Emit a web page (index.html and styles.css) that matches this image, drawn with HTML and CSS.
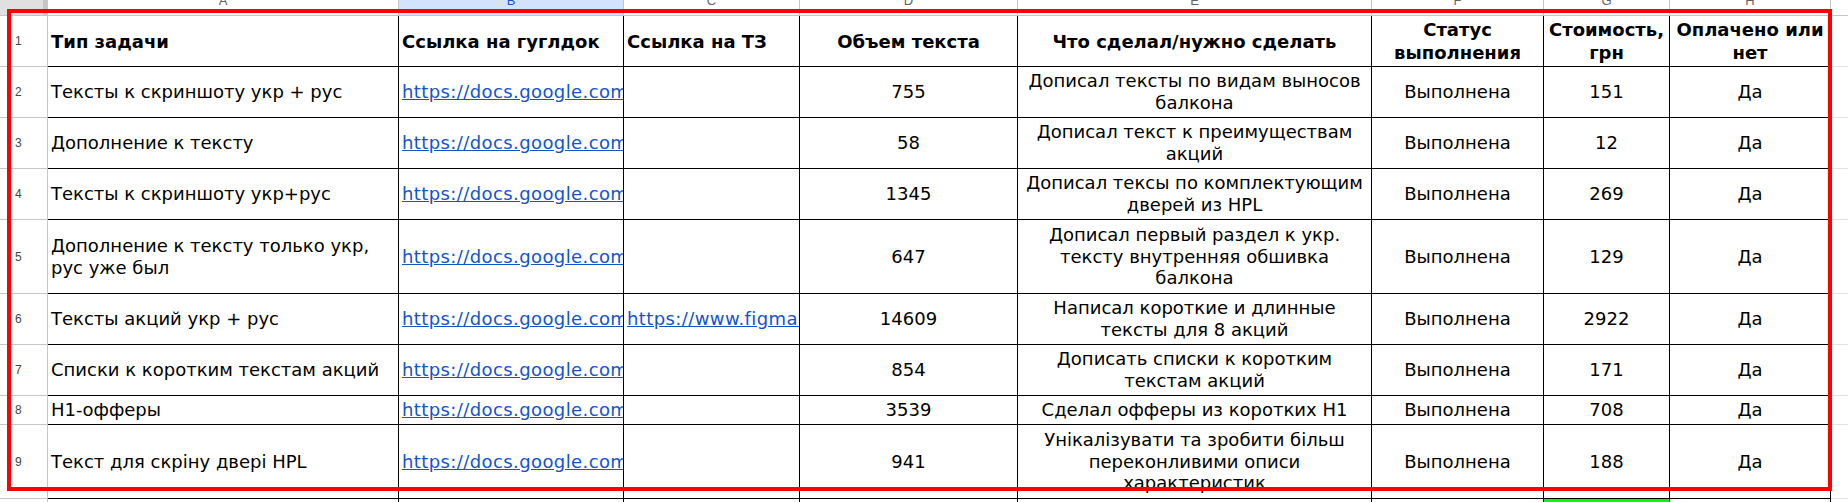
FILE: index.html
```html
<!DOCTYPE html>
<html lang="ru">
<head>
<meta charset="utf-8">
<title>Таблица задач</title>
<link rel="stylesheet" href="styles.css">
</head>
<body>
<div class="sheet">
  <div class="corner"></div>
  <div class="colhead"><span>A</span></div>
  <div class="colhead sel"><span>B</span></div>
  <div class="colhead"><span>C</span></div>
  <div class="colhead"><span>D</span></div>
  <div class="colhead"><span>E</span></div>
  <div class="colhead"><span>F</span></div>
  <div class="colhead"><span>G</span></div>
  <div class="colhead"><span>H</span></div>
  <div class="colhead last"></div>

  <div class="rowhead">1</div>
  <div class="cell hd">Тип задачи</div>
  <div class="cell hd">Ссылка на гуглдок</div>
  <div class="cell hd">Ссылка на ТЗ</div>
  <div class="cell hd c">Объем текста</div>
  <div class="cell hd c">Что сделал/нужно сделать</div>
  <div class="cell hd c">Статус<br>выполнения</div>
  <div class="cell hd c">Стоимость,<br>грн</div>
  <div class="cell hd c">Оплачено или<br>нет</div>
  <div class="out"></div>

  <div class="rowhead">2</div>
  <div class="cell">Тексты к скриншоту укр + рус</div>
  <div class="cell"><a class="lnk" href="#">https://docs.google.com/document/d/1</a></div>
  <div class="cell"></div>
  <div class="cell c">755</div>
  <div class="cell c">Дописал тексты по видам выносов<br>балкона</div>
  <div class="cell c">Выполнена</div>
  <div class="cell c">151</div>
  <div class="cell c">Да</div>
  <div class="out"></div>

  <div class="rowhead">3</div>
  <div class="cell">Дополнение к тексту</div>
  <div class="cell"><a class="lnk" href="#">https://docs.google.com/document/d/2</a></div>
  <div class="cell"></div>
  <div class="cell c">58</div>
  <div class="cell c">Дописал текст к преимуществам<br>акций</div>
  <div class="cell c">Выполнена</div>
  <div class="cell c">12</div>
  <div class="cell c">Да</div>
  <div class="out"></div>

  <div class="rowhead">4</div>
  <div class="cell">Тексты к скриншоту укр+рус</div>
  <div class="cell"><a class="lnk" href="#">https://docs.google.com/document/d/3</a></div>
  <div class="cell"></div>
  <div class="cell c">1345</div>
  <div class="cell c">Дописал тексы по комплектующим<br>дверей из HPL</div>
  <div class="cell c">Выполнена</div>
  <div class="cell c">269</div>
  <div class="cell c">Да</div>
  <div class="out"></div>

  <div class="rowhead">5</div>
  <div class="cell">Дополнение к тексту только укр,<br>рус уже был</div>
  <div class="cell"><a class="lnk" href="#">https://docs.google.com/document/d/4</a></div>
  <div class="cell"></div>
  <div class="cell c">647</div>
  <div class="cell c">Дописал первый раздел к укр.<br>тексту внутренняя обшивка<br>балкона</div>
  <div class="cell c">Выполнена</div>
  <div class="cell c">129</div>
  <div class="cell c">Да</div>
  <div class="out"></div>

  <div class="rowhead">6</div>
  <div class="cell">Тексты акций укр + рус</div>
  <div class="cell"><a class="lnk" href="#">https://docs.google.com/document/d/5</a></div>
  <div class="cell"><a class="lnk" href="#">https://www.figma.com/file/6</a></div>
  <div class="cell c">14609</div>
  <div class="cell c">Написал короткие и длинные<br>тексты для 8 акций</div>
  <div class="cell c">Выполнена</div>
  <div class="cell c">2922</div>
  <div class="cell c">Да</div>
  <div class="out"></div>

  <div class="rowhead">7</div>
  <div class="cell">Списки к коротким текстам акций</div>
  <div class="cell"><a class="lnk" href="#">https://docs.google.com/document/d/7</a></div>
  <div class="cell"></div>
  <div class="cell c">854</div>
  <div class="cell c">Дописать списки к коротким<br>текстам акций</div>
  <div class="cell c">Выполнена</div>
  <div class="cell c">171</div>
  <div class="cell c">Да</div>
  <div class="out"></div>

  <div class="rowhead">8</div>
  <div class="cell">Н1-офферы</div>
  <div class="cell"><a class="lnk" href="#">https://docs.google.com/document/d/8</a></div>
  <div class="cell"></div>
  <div class="cell c">3539</div>
  <div class="cell c">Сделал офферы из коротких Н1</div>
  <div class="cell c">Выполнена</div>
  <div class="cell c">708</div>
  <div class="cell c">Да</div>
  <div class="out"></div>

  <div class="rowhead">9</div>
  <div class="cell">Текст для скріну двері HPL</div>
  <div class="cell"><a class="lnk" href="#">https://docs.google.com/document/d/9</a></div>
  <div class="cell"></div>
  <div class="cell c">941</div>
  <div class="cell c">Унікалізувати та зробити більш<br>переконливими описи<br>характеристик</div>
  <div class="cell c">Выполнена</div>
  <div class="cell c">188</div>
  <div class="cell c">Да</div>
  <div class="out"></div>

  <div class="rowhead">10</div>
  <div class="cell"></div>
  <div class="cell"></div>
  <div class="cell"></div>
  <div class="cell"></div>
  <div class="cell"></div>
  <div class="cell"></div>
  <div class="cell green"></div>
  <div class="cell"></div>
  <div class="out"></div>

  <div class="frame"></div>
</div>
</body>
</html>
```

FILE: styles.css
```css
* { box-sizing: border-box; }

html, body {
  margin: 0;
  padding: 0;
  background: #ffffff;
  overflow: hidden;
}

.sheet {
  position: relative;
  display: grid;
  grid-template-columns: 48px 351px 225px 176px 218px 354px 172px 126px 161px 1fr;
  grid-template-rows: 16px 51px 51px 51px 51px 74px 51px 51px 29px 74px 30px;
  width: 1848px;
  height: 502px;
  overflow: hidden;
  font-family: "DejaVu Sans", sans-serif;
  font-size: 18px;
  color: #000000;
}

.corner {
  background: #e0e0e0;
  border-right: 5px solid #c6c6c6;
  border-bottom: 1px solid #c4c4c4;
}

.colhead {
  display: flex;
  justify-content: center;
  align-items: flex-start;
  overflow: hidden;
  border-right: 1px solid #c4c7c5;
  border-bottom: 1px solid #c4c7c5;
  font-family: "Liberation Sans", Arial, sans-serif;
  font-size: 13px;
  line-height: 13px;
  color: #5f6368;
}

.colhead span {
  margin-top: -6px;
}

.colhead.sel {
  background: #d3e3fd;
  color: #0b57d0;
}

.colhead.last {
  border-right: none;
}

.rowhead {
  display: flex;
  align-items: center;
  padding-left: 15px;
  border-right: 1px solid #c4c7c5;
  border-bottom: 1px solid #c4c7c5;
  font-family: "Liberation Sans", Arial, sans-serif;
  font-size: 12px;
  color: #444746;
}

.cell {
  display: flex;
  align-items: center;
  overflow: hidden;
  padding: 0 3px;
  border-right: 1px solid #000000;
  border-bottom: 1px solid #000000;
  line-height: 21.7px;
  white-space: nowrap;
}

.cell.c {
  justify-content: center;
  text-align: center;
}

.cell.hd {
  font-weight: bold;
  line-height: 23px;
}

.lnk {
  flex-shrink: 0;
  color: #1155cc;
  text-decoration: underline;
  white-space: nowrap;
  letter-spacing: 0.4px;
}

.green {
  background: #00ff00;
}

.out {
  border-bottom: 1px solid #e1e1e1;
}

.frame {
  position: absolute;
  left: 7px;
  top: 9px;
  width: 1825px;
  height: 482px;
  border: 4px solid #ff0000;
  pointer-events: none;
}
```
